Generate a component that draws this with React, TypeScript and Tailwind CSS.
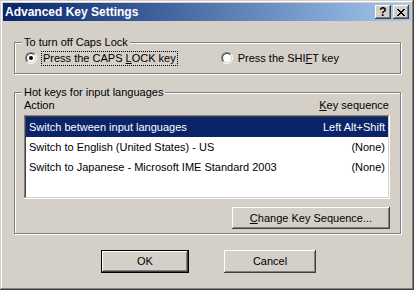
const raised =
  'shadow-[inset_-1px_-1px_#404040,inset_1px_1px_#ffffff,inset_-2px_-2px_#808080,inset_2px_2px_#d4d0c8]';

function Radio({ checked }: { checked?: boolean }) {
  return (
    <span className="flex h-[12px] w-[12px] shrink-0 items-center justify-center rounded-full border border-b-white border-l-[#808080] border-r-white border-t-[#808080]">
      <span className="flex h-[10px] w-[10px] items-center justify-center rounded-full border border-b-[#d4d0c8] border-l-[#404040] border-r-[#d4d0c8] border-t-[#404040] bg-white">
        {checked && <span className="h-[4px] w-[4px] rounded-full bg-black" />}
      </span>
    </span>
  );
}

function GroupBox({
  label,
  className,
  children,
}: {
  label: string;
  className: string;
  children: React.ReactNode;
}) {
  return (
    <div
      className={`relative border border-[#808080] shadow-[inset_1px_1px_#ffffff,1px_1px_#ffffff] ${className}`}
    >
      <span className="absolute left-[7px] top-[-8px] bg-[#d4d0c8] px-[2px] leading-[14px]">
        {label}
      </span>
      {children}
    </div>
  );
}

const rows = [
  { action: 'Switch between input languages', keys: 'Left Alt+Shift' },
  { action: 'Switch to English (United States) - US', keys: '(None)' },
  { action: 'Switch to Japanese - Microsoft IME Standard 2003', keys: '(None)' },
];

export default function App() {
  return (
    <div className="flex h-[290px] w-[414px] flex-col bg-[#d4d0c8] p-[3px] font-['Liberation_Sans',Arial,sans-serif] text-[11px] text-black shadow-[inset_-1px_-1px_#404040,inset_1px_1px_#d4d0c8,inset_-2px_-2px_#808080,inset_2px_2px_#ffffff]">
      <div className="flex h-[18px] shrink-0 items-center justify-between bg-gradient-to-r from-[#0a246a] to-[#a6caf0] pl-[2px] pr-[2px]">
        <span className="text-[12px] font-bold text-white">Advanced Key Settings</span>
        <div className="flex gap-[2px]">
          <span
            className={`flex h-[14px] w-[16px] items-center justify-center bg-[#d4d0c8] text-[12px] font-bold leading-none ${raised}`}
          >
            ?
          </span>
          <span
            className={`flex h-[14px] w-[16px] items-center justify-center bg-[#d4d0c8] ${raised}`}
          >
            <svg width="8" height="7" viewBox="0 0 8 7" shapeRendering="crispEdges">
              <path
                d="M0 0h2v1h-2zM6 0h2v1h-2zM1 1h2v1h-2zM5 1h2v1h-2zM2 2h4v1h-4zM3 3h2v1h-2zM2 4h4v1h-4zM1 5h2v1h-2zM5 5h2v1h-2zM0 6h2v1h-2zM6 6h2v1h-2z"
                fill="#000"
              />
            </svg>
          </span>
        </div>
      </div>

      <div className="flex flex-col pl-[11px] pr-[10px]">
        <GroupBox label="To turn off Caps Lock" className="mt-[21px] flex h-[32px] items-center">
          <div className="ml-[10px] flex items-center">
            <Radio checked />
            <span className="ml-[4px] border border-dotted border-black px-[1px] leading-[13px]">
              Press the CAPS <span className="underline">L</span>OCK key
            </span>
          </div>
          <div className="ml-[43px] flex items-center">
            <Radio />
            <span className="ml-[5px] leading-[13px]">
              Press the SHI<span className="underline">F</span>T key
            </span>
          </div>
        </GroupBox>

        <GroupBox label="Hot keys for input languages" className="mt-[18px] h-[142px]">
          <div className="flex flex-col pl-[9px] pr-[10px] pt-[5px]">
            <div className="flex h-[14px] items-center justify-between">
              <span>Action</span>
              <span className="pr-[1px]">
                <span className="underline">K</span>ey sequence
              </span>
            </div>
            <div className="mt-[3px] h-[84px] bg-white p-[2px] shadow-[inset_-1px_-1px_#ffffff,inset_1px_1px_#808080,inset_-2px_-2px_#d4d0c8,inset_2px_2px_#404040]">
              {rows.map((row, i) => (
                <div
                  key={row.action}
                  className={`flex h-[20px] items-center justify-between pl-[3px] pr-[3px] ${
                    i === 0 ? 'bg-[#0a246a] text-white' : ''
                  }`}
                >
                  <span>{row.action}</span>
                  <span>{row.keys}</span>
                </div>
              ))}
            </div>
            <div className="mt-[8px] flex justify-end">
              <span
                className={`flex h-[22px] w-[158px] items-center justify-center ${raised}`}
              >
                <span>
                  <span className="underline">C</span>hange Key Sequence...
                </span>
              </span>
            </div>
          </div>
        </GroupBox>
      </div>

      <div className="mt-[16px] flex">
        <span className="ml-[98px] flex h-[23px] w-[88px] items-center justify-center border border-black">
          <span className={`flex h-full w-full items-center justify-center ${raised}`}>OK</span>
        </span>
        <span
          className={`ml-[35px] flex h-[23px] w-[92px] items-center justify-center ${raised}`}
        >
          Cancel
        </span>
      </div>
    </div>
  );
}
